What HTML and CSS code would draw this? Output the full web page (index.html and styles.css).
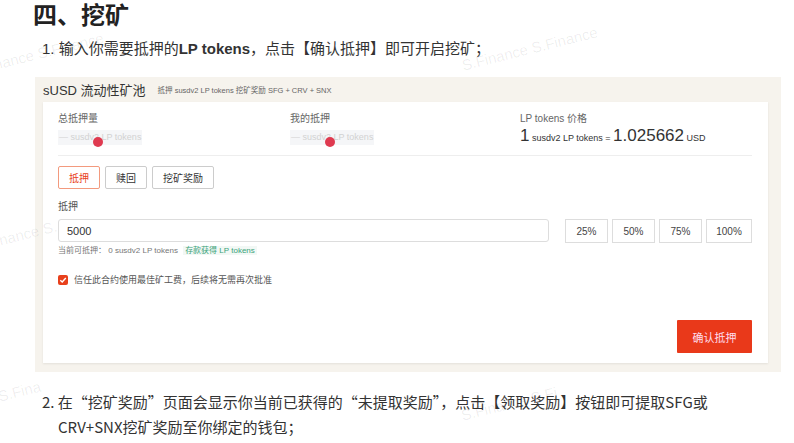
FILE: index.html
```html
<!DOCTYPE html>
<html lang="zh-CN">
  <head>
    <meta charset="UTF-8" />
    <meta name="viewport" content="width=device-width, initial-scale=1.0" />
    <title>四、挖矿</title>
    <link rel="stylesheet" href="styles.css">
  </head>
  <body>
    <div class="doc">
      <h1 class="doc-title">四、挖矿</h1>
      <p class="step">1. 输入你需要抵押的<b>LP tokens</b>，点击【确认抵押】即可开启挖矿；</p>

      <div class="shot">
        <div class="shot-head">
          <span class="pool-name">sUSD 流动性矿池</span>
          <span class="pool-desc">抵押 susdv2 LP tokens 挖矿奖励 SFG + CRV + SNX</span>
        </div>
        <div class="card">
          <div class="stats">
            <div class="stat">
              <div class="stat-label">总抵押量</div>
              <div class="stat-blur">— susdv2 LP tokens<span class="dot"></span></div>
            </div>
            <div class="stat">
              <div class="stat-label">我的抵押</div>
              <div class="stat-blur">— susdv2 LP tokens<span class="dot"></span></div>
            </div>
            <div class="stat">
              <div class="stat-label">LP tokens 价格</div>
              <div class="price"><span class="big">1</span> susdv2 LP tokens = <span class="big">1.025662</span> USD</div>
            </div>
          </div>

          <div class="tabs">
            <button class="tab active">抵押</button>
            <button class="tab">赎回</button>
            <button class="tab">挖矿奖励</button>
          </div>

          <div class="field-label">抵押</div>
          <div class="amount-row">
            <input class="amount" type="text" value="5000" />
            <div class="pcts">
              <button class="pct">25%</button>
              <button class="pct">50%</button>
              <button class="pct">75%</button>
              <button class="pct wide">100%</button>
            </div>
          </div>
          <div class="hint">当前可抵押： 0 susdv2 LP tokens <span class="hint-link">存款获得 LP tokens</span></div>

          <label class="trust">
            <span class="check">
              <svg width="8" height="8" viewBox="0 0 8 8"><path d="M1.3 4.2 L3.2 6 L6.8 2" fill="none" stroke="#fff" stroke-width="1.4"/></svg>
            </span>
            信任此合约使用最佳矿工费，后续将无需再次批准
          </label>

          <div class="actions">
            <button class="confirm">确认抵押</button>
          </div>
        </div>
      </div>

      <p class="step step-2">2. 在“挖矿奖励”页面会显示你当前已获得的“未提取奖励”，点击【领取奖励】按钮即可提取SFG或CRV+SNX挖矿奖励至你绑定的钱包；</p>
    </div>

    <div class="mark" style="left:-20px;top:44px">Finance S.Finance</div>
    <div class="mark" style="left:460px;top:40px">S.Finance S.Finance</div>
    <div class="mark" style="left:-14px;top:226px">Finance S.</div>
    <div class="mark" style="left:-22px;top:385px">ce S.Fina</div>
    <div class="mark" style="left:460px;top:395px">S.Finance S.Fi</div>
  </body>
</html>
```

FILE: styles.css
```css
body {
  margin: 0;
  padding: 0;
  background-color: #fff;
  color: #333;
  font-family: "Liberation Sans", "Noto Sans CJK SC", sans-serif;
  position: relative;
  overflow: hidden;
}

.doc {
  padding-left: 33px;
  width: 760px;
}

.doc-title {
  margin: 0;
  font-size: 24px;
  line-height: 32px;
  font-weight: bold;
  color: #222;
}

.step {
  margin: 4px 0 0;
  padding-left: 9px;
  font-size: 15px;
  line-height: 25px;
  color: #333;
}

.step-2 {
  margin-top: 17px;
  padding-left: 25px;
  text-indent: -16px;
  width: 700px;
  font-family: "Noto Sans CJK SC", sans-serif;
}

.shot {
  margin: 16px 0 0 2px;
  width: 725px;
  padding: 0 13px 9px 8px;
  background-color: #f6f3ed;
}

.shot-head {
  height: 25px;
  display: flex;
  align-items: center;
}

.pool-name {
  font-size: 13px;
  color: #333;
  margin-right: 12px;
}

.pool-desc {
  font-size: 7.5px;
  color: #666;
}

.card {
  background-color: #fff;
  padding: 10px 16px 10px 15px;
  box-shadow: 0 1px 2px rgba(0, 0, 0, 0.08);
}

.stats {
  display: grid;
  grid-template-columns: 232px 230px 1fr;
  padding-bottom: 8px;
  border-bottom: 1px solid #eee;
}

.stat-label {
  font-size: 10px;
  line-height: 14px;
  color: #666;
}

.stat-blur {
  position: relative;
  display: inline-block;
  margin-top: 1px;
  padding: 0 1px;
  height: 15px;
  line-height: 15px;
  font-size: 9px;
  color: #d2d2d2;
  background-color: #f5f6f8;
}

.dot {
  position: absolute;
  left: 35px;
  top: 7px;
  width: 10px;
  height: 10px;
  border-radius: 50%;
  background-color: #df3a50;
}

.price {
  margin-top: 1px;
  font-size: 9px;
  line-height: 18px;
  color: #333;
}

.price .big {
  font-size: 17px;
}

.tabs {
  display: flex;
  gap: 5px;
  margin-top: 10px;
}

.tab {
  height: 23px;
  padding: 0 10px;
  border: 1px solid #ccc;
  border-radius: 2px;
  background-color: #fff;
  font-family: inherit;
  font-size: 10px;
  color: #333;
}

.tab.active {
  border-color: #f39a7e;
  color: #e8401c;
}

.field-label {
  margin-top: 11px;
  font-size: 10px;
  line-height: 14px;
  color: #555;
}

.amount-row {
  display: flex;
  margin-top: 5px;
}

.amount {
  width: 491px;
  height: 23px;
  box-sizing: border-box;
  padding: 0 8px;
  border: 1px solid #ddd;
  border-radius: 3px;
  outline: none;
  font-family: inherit;
  font-size: 11px;
  color: #333;
}

.pcts {
  display: flex;
  gap: 4px;
  margin-left: 16px;
}

.pct {
  width: 43px;
  height: 24px;
  border: 1px solid #ddd;
  background-color: #fff;
  font-family: inherit;
  font-size: 10px;
  color: #444;
}

.pct.wide {
  width: 46px;
}

.hint {
  margin-top: 1px;
  font-size: 8px;
  line-height: 14px;
  color: #777;
}

.hint-link {
  margin-left: 3px;
  padding: 0 2px;
  color: #3aa37a;
  background-color: #f2f8f5;
}

.trust {
  display: flex;
  align-items: center;
  gap: 6px;
  margin-top: 15px;
  font-size: 9px;
  color: #555;
}

.check {
  display: flex;
  align-items: center;
  justify-content: center;
  width: 10px;
  height: 10px;
  border-radius: 2px;
  background-color: #e8401c;
}

.actions {
  display: flex;
  justify-content: flex-end;
  margin-top: 34px;
}

.confirm {
  width: 75px;
  height: 33px;
  border: none;
  border-radius: 1px;
  background-color: #e9391a;
  font-family: inherit;
  font-size: 11px;
  color: #fde;
}

.mark {
  position: absolute;
  font-size: 15px;
  color: rgba(0, 0, 0, 0.07);
  transform: rotate(-14deg);
  white-space: nowrap;
  pointer-events: none;
}
```
